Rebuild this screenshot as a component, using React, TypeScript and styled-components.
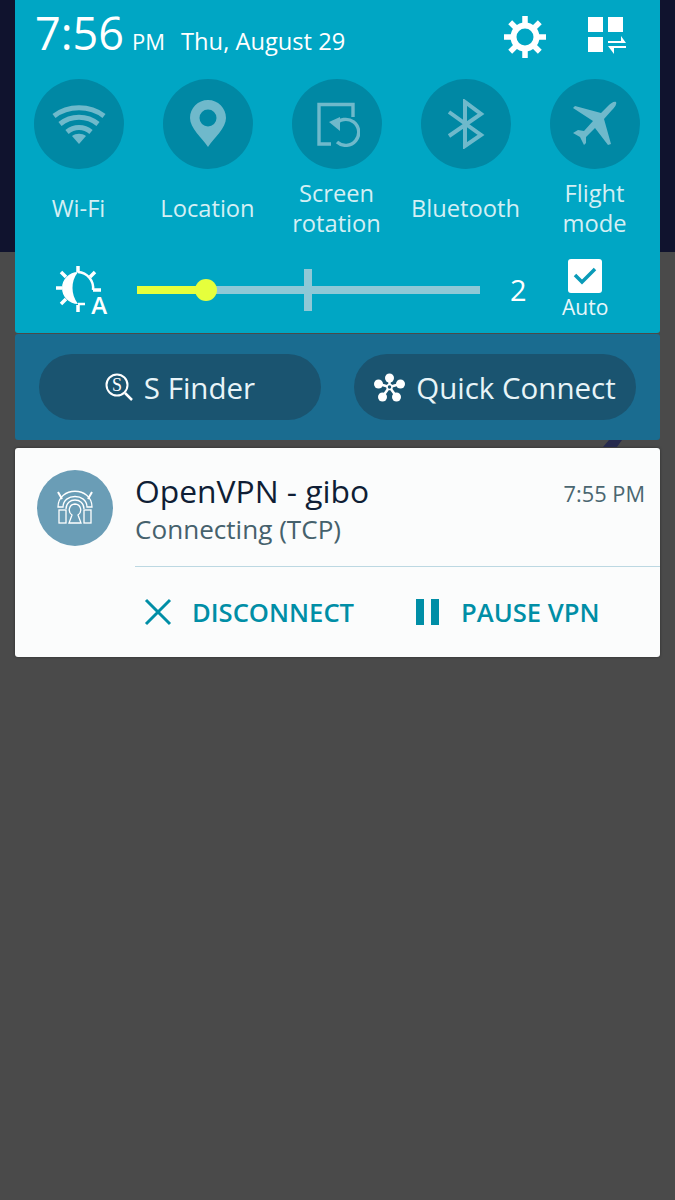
import styled, { createGlobalStyle } from "styled-components";

const GlobalStyle = createGlobalStyle`
  html, body {
    margin: 0;
    padding: 0;
    background: #4a4a4a;
  }
  * {
    box-sizing: border-box;
  }
`;

const WifiIcon = () => (
  <svg width="54" height="40" viewBox="0 0 54 40">
    <g fill="none" stroke="#6fb9cb" strokeWidth="5">
      <path d="M2 12C16 1 38 1 52 12" />
      <path d="M8 20C19 11 35 11 46 20" />
      <path d="M15 28C22 22 32 22 39 28" />
    </g>
    <path d="M20 32C24 29 30 29 34 32L27 40Z" fill="#6fb9cb" />
  </svg>
);

const PinIcon = () => (
  <svg width="36" height="48" viewBox="0 0 36 48">
    <path
      fillRule="evenodd"
      d="M18 0C8 0 0 8 0 18C0 28 12 38 18 47C24 38 36 28 36 18C36 8 28 0 18 0ZM18 9.500A8.500 8.500 0 1 1 18 26.500A8.500 8.500 0 1 1 18 9.500Z"
      fill="#6fb9cb"
    />
  </svg>
);

const RotationIcon = () => (
  <svg width="46" height="46" viewBox="0 0 46 46">
    <g fill="none" stroke="#6fb9cb" strokeWidth="3.4">
      <path d="M39 16V3.500H5V43H17" />
      <path d="M21 24A13 13 0 1 1 23 41" />
    </g>
    <path d="M15 21L26 16V30Z" fill="#6fb9cb" />
  </svg>
);

const BluetoothIcon = () => (
  <svg width="38" height="50" viewBox="0 0 38 50">
    <path
      d="M2 13L34 36L18 47V3L34 15L2 37"
      fill="none"
      stroke="#6fb9cb"
      strokeWidth="4"
    />
  </svg>
);

const PlaneIcon = () => (
  <svg width="46" height="46" viewBox="0 0 46 46">
    <path
      d="M44 1C42 0 39 2 36 5L29 12L3 5L1 7L21 20L12 30L6 29L1 32L8 36L12 44L14 42L14 36L23 27L36 44L39 43L32 18L40 9C43 6 45 3 44 1Z"
      fill="#6fb9cb"
    />
  </svg>
);

const GearIcon = () => (
  <svg width="42" height="42" viewBox="0 0 42 42">
    <g stroke="#fff" strokeWidth="5.500">
      <path d="M21 0V10M21 32V42M0 21H10M32 21H42M6.200 6.200L13 13M29 29L35.800 35.800M35.800 6.200L29 13M13 29L6.200 35.800" />
    </g>
    <circle cx="21" cy="21" r="11.500" fill="none" stroke="#fff" strokeWidth="6" />
  </svg>
);

const GridSwapIcon = () => (
  <svg width="39" height="39" viewBox="0 -1 39 39">
    <rect x="0" y="0" width="15" height="15" fill="#fff" />
    <rect x="20" y="0" width="15" height="15" fill="#fff" />
    <rect x="0" y="20" width="15" height="15" fill="#fff" />
    <path d="M20 24H33V19L38 26H20Z" fill="#fff" />
    <path d="M38 29H20L26 37V31H38Z" fill="#fff" />
  </svg>
);

const AutoBrightnessIcon = () => (
  <svg width="50" height="48" viewBox="0 0 50 48">
    <g fill="none" stroke="#fff" strokeWidth="3.500">
      <path d="M23 0V6M23 39V46M1 22H7M6 6L11 11M40 6L35 11M6 38L11 33M38 24H46" />
      <path d="M23 6A16 16 0 0 1 38 24" strokeWidth="2.500" />
      <path d="M23 38H30" strokeWidth="2.500" />
    </g>
    <path d="M23 6A16 16 0 0 0 23 38A26 26 0 0 1 23 6Z" fill="#fff" />
  </svg>
);

const CheckIcon = () => (
  <svg width="24" height="18" viewBox="0 0 24 18">
    <path d="M2 8L9 15L22 2" fill="none" stroke="#0a9bb8" strokeWidth="3.500" />
  </svg>
);

const SearchSIcon = () => (
  <svg width="28" height="29" viewBox="0 0 28 29">
    <circle cx="12" cy="12" r="10.500" fill="none" stroke="#fff" strokeWidth="2" />
    <path d="M20 20L27 27" stroke="#fff" strokeWidth="2.500" />
    <text x="12" y="18" fontSize="18" textAnchor="middle" fill="#fff" fontFamily="'Liberation Serif', serif">
      S
    </text>
  </svg>
);

const QuickConnectIcon = () => (
  <svg width="31" height="29" viewBox="0 0 31 29">
    <g stroke="#fff" strokeWidth="2.500">
      <path d="M15.500 14L15.500 5M15.500 14L5 11M15.500 14L26 11M15.500 14L9 23M15.500 14L22 23" />
    </g>
    <g fill="#fff">
      <circle cx="15.500" cy="5" r="4.500" />
      <circle cx="4.500" cy="11" r="4.500" />
      <circle cx="26.500" cy="11" r="4.500" />
      <circle cx="8.500" cy="24" r="4.500" />
      <circle cx="22.500" cy="24" r="4.500" />
    </g>
    <circle cx="15.500" cy="14" r="2.500" fill="#1a5470" stroke="#fff" strokeWidth="1.500" />
  </svg>
);

const OpenVpnIcon = () => (
  <svg width="36" height="36" viewBox="0 0 36 36">
    <g fill="none" stroke="#fff" strokeWidth="1.300">
      <path d="M1 2L5 9M35 2L31 9" strokeWidth="2" />
      <path d="M1 17C1 -4 35 -4 35 17H30C30 3 6 3 6 17Z" />
      <path d="M9 19C9 7 27 7 27 19" />
      <rect x="2" y="20" width="7" height="13" />
      <rect x="27" y="20" width="7" height="13" />
      <path d="M18 14A6 6 0 0 1 21 25L24 33H12L15 25A6 6 0 0 1 18 14Z" />
    </g>
  </svg>
);

const CloseIcon = () => (
  <svg width="28" height="28" viewBox="0 0 28 28">
    <path d="M2 2L26 26M26 2L2 26" stroke="#008ea6" strokeWidth="3" />
  </svg>
);

const WallpaperSliver = () => (
  <svg width="19" height="8" viewBox="0 0 19 8">
    <path d="M6 0H19L14 7H0Z" fill="#262a4e" />
  </svg>
);

const toggles = [
  { label: ["Wi-Fi"], icon: <WifiIcon /> },
  { label: ["Location"], icon: <PinIcon /> },
  { label: ["Screen", "rotation"], icon: <RotationIcon /> },
  { label: ["Bluetooth"], icon: <BluetoothIcon /> },
  { label: ["Flight", "mode"], icon: <PlaneIcon /> },
];

const App = () => {
  return (
    <Page>
      <GlobalStyle />
      <QuickPanel>
        <Header>
          <Clock>
            <Time>7:56</Time>
            <Meridiem>PM</Meridiem>
            <DateText>Thu, August 29</DateText>
          </Clock>
          <HeaderIcons>
            <GearIcon />
            <GridSwapIcon />
          </HeaderIcons>
        </Header>
        <ToggleGrid>
          {toggles.map((toggle) => (
            <Toggle key={toggle.label[0]}>
              <ToggleCircle>{toggle.icon}</ToggleCircle>
              <ToggleLabel>
                {toggle.label.map((line) => (
                  <span key={line}>{line}</span>
                ))}
              </ToggleLabel>
            </Toggle>
          ))}
        </ToggleGrid>
        <BrightnessRow>
          <BrightnessIconBox>
            <AutoBrightnessIcon />
            <AutoLetter>A</AutoLetter>
          </BrightnessIconBox>
          <Track>
            <TrackFill />
            <Thumb />
            <Tick />
          </Track>
          <Level>2</Level>
          <AutoBox>
            <CheckBox>
              <CheckIcon />
            </CheckBox>
            <AutoLabel>Auto</AutoLabel>
          </AutoBox>
        </BrightnessRow>
      </QuickPanel>
      <ShortcutPanel>
        <Pill>
          <SearchSIcon />
          S Finder
        </Pill>
        <Pill>
          <QuickConnectIcon />
          Quick Connect
        </Pill>
      </ShortcutPanel>
      <PanelGap>
        <WallpaperSliver />
      </PanelGap>
      <Card>
        <CardTop>
          <AppBadge>
            <OpenVpnIcon />
          </AppBadge>
          <CardText>
            <TitleRow>
              <Title>OpenVPN - gibo</Title>
              <Stamp>7:55 PM</Stamp>
            </TitleRow>
            <Subtitle>Connecting (TCP)</Subtitle>
          </CardText>
        </CardTop>
        <Divider />
        <Actions>
          <Action>
            <CloseIcon />
            DISCONNECT
          </Action>
          <Action>
            <PauseIcon />
            PAUSE VPN
          </Action>
        </Actions>
      </Card>
    </Page>
  );
};

const Page = styled.div`
  width: 675px;
  height: 1200px;
  padding: 0 15px;
  overflow: hidden;
  font-family: "Open Sans", "Noto Sans", sans-serif;
  background: linear-gradient(#10132e 252px, #4a4a4a 252px);
`;

const QuickPanel = styled.section`
  height: 333px;
  background: #00a6c4;
  border-radius: 0 0 3px 3px;
  color: #fff;
`;

const Header = styled.header`
  height: 79px;
  padding: 0 33px 0 20px;
  display: flex;
  align-items: flex-start;
  justify-content: space-between;
`;

const Clock = styled.div`
  display: flex;
  align-items: baseline;
  height: 66px;
`;

const Time = styled.span`
  font-size: 45px;
  line-height: 66px;
`;

const Meridiem = styled.span`
  margin-left: 8px;
  font-size: 22px;
`;

const DateText = styled.span`
  margin-left: 16px;
  font-size: 23.7px;
`;

const HeaderIcons = styled.div`
  display: flex;
  align-items: flex-start;
  gap: 42px;
  padding-top: 16px;
`;

const ToggleGrid = styled.div`
  display: grid;
  grid-template-columns: repeat(5, 129px);
  margin-left: -1px;
`;

const Toggle = styled.div`
  display: flex;
  flex-direction: column;
  align-items: center;
`;

const ToggleCircle = styled.div`
  width: 90px;
  height: 90px;
  border-radius: 50%;
  background: #0088a4;
  display: flex;
  align-items: center;
  justify-content: center;
`;

const ToggleLabel = styled.div`
  height: 60px;
  margin-top: 9px;
  display: flex;
  flex-direction: column;
  align-items: center;
  justify-content: center;
  font-size: 23.7px;
  line-height: 30px;
  color: #d4eff4;
  white-space: nowrap;
`;

const BrightnessRow = styled.div`
  height: 95px;
  padding: 8px 0 0 40px;
  display: flex;
  align-items: center;
`;

const BrightnessIconBox = styled.div`
  position: relative;
  width: 50px;
  height: 48px;
`;

const AutoLetter = styled.span`
  position: absolute;
  right: -2px;
  bottom: -2px;
  font-size: 24px;
  line-height: 22px;
  font-weight: 600;
`;

const Track = styled.div`
  position: relative;
  width: 343px;
  height: 8px;
  margin: 0 0 0 32px;
  background: #8fc8d6;
`;

const TrackFill = styled.div`
  width: 69px;
  height: 100%;
  background: #e6ff3c;
`;

const Thumb = styled.div`
  position: absolute;
  top: -7px;
  left: 58px;
  width: 22px;
  height: 22px;
  border-radius: 50%;
  background: #e6ff3c;
`;

const Tick = styled.div`
  position: absolute;
  top: -17px;
  left: 167px;
  width: 8px;
  height: 42px;
  background: #8fc8d6;
`;

const Level = styled.span`
  margin-left: 30px;
  width: 18px;
  font-size: 29px;
  line-height: 1;
`;

const AutoBox = styled.div`
  margin-left: 34px;
  display: flex;
  flex-direction: column;
  align-items: center;
`;

const CheckBox = styled.div`
  width: 34px;
  height: 34px;
  border-radius: 3px;
  background: #fff;
  display: flex;
  align-items: center;
  justify-content: center;
`;

const AutoLabel = styled.span`
  font-size: 21px;
  line-height: 28px;
  color: #e8f7fa;
`;

const ShortcutPanel = styled.section`
  height: 106px;
  margin-top: 1px;
  padding: 20px 24px;
  background: #1a6c90;
  border-radius: 3px;
  display: flex;
  justify-content: space-between;
`;

const Pill = styled.div`
  width: 282px;
  height: 66px;
  border-radius: 33px;
  background: #1a5470;
  color: #e8f4f8;
  font-size: 29.5px;
  display: flex;
  align-items: center;
  justify-content: center;
  gap: 11px;
`;

const PanelGap = styled.div`
  height: 8px;
  padding-right: 38px;
  display: flex;
  justify-content: flex-end;
`;

const Card = styled.section`
  height: 209px;
  background: #fbfcfc;
  border-radius: 3px;
  box-shadow: 0 0 3px rgba(0, 0, 0, 0.4);
  display: flex;
  flex-direction: column;
`;

const CardTop = styled.div`
  height: 118px;
  padding: 22px 15px 0 22px;
  display: flex;
`;

const AppBadge = styled.div`
  width: 76px;
  height: 76px;
  flex: none;
  border-radius: 50%;
  background: #6a9db6;
  display: flex;
  align-items: center;
  justify-content: center;
`;

const CardText = styled.div`
  flex: 1;
  margin-left: 22px;
  display: flex;
  flex-direction: column;
`;

const TitleRow = styled.div`
  display: flex;
  align-items: center;
  justify-content: space-between;
`;

const Title = styled.span`
  font-size: 31.8px;
  line-height: 42px;
  color: #0f1e35;
`;

const Stamp = styled.span`
  padding-top: 5px;
  font-size: 21.8px;
  color: #4a6670;
`;

const Subtitle = styled.span`
  font-size: 26.1px;
  line-height: 34px;
  color: #45616c;
`;

const Divider = styled.div`
  height: 1px;
  margin-left: 120px;
  background: #bcd8e2;
`;

const Actions = styled.div`
  flex: 1;
  padding-left: 129px;
  display: flex;
  align-items: center;
  gap: 62px;
`;

const Action = styled.div`
  display: flex;
  align-items: center;
  gap: 20px;
  font-size: 25.6px;
  font-weight: 600;
  color: #008ea6;
  white-space: nowrap;
`;

const PauseIcon = styled.span`
  width: 23px;
  height: 26px;
  margin-right: 2px;
  border-left: 8px solid #008ea6;
  border-right: 8px solid #008ea6;
`;

export default App;
